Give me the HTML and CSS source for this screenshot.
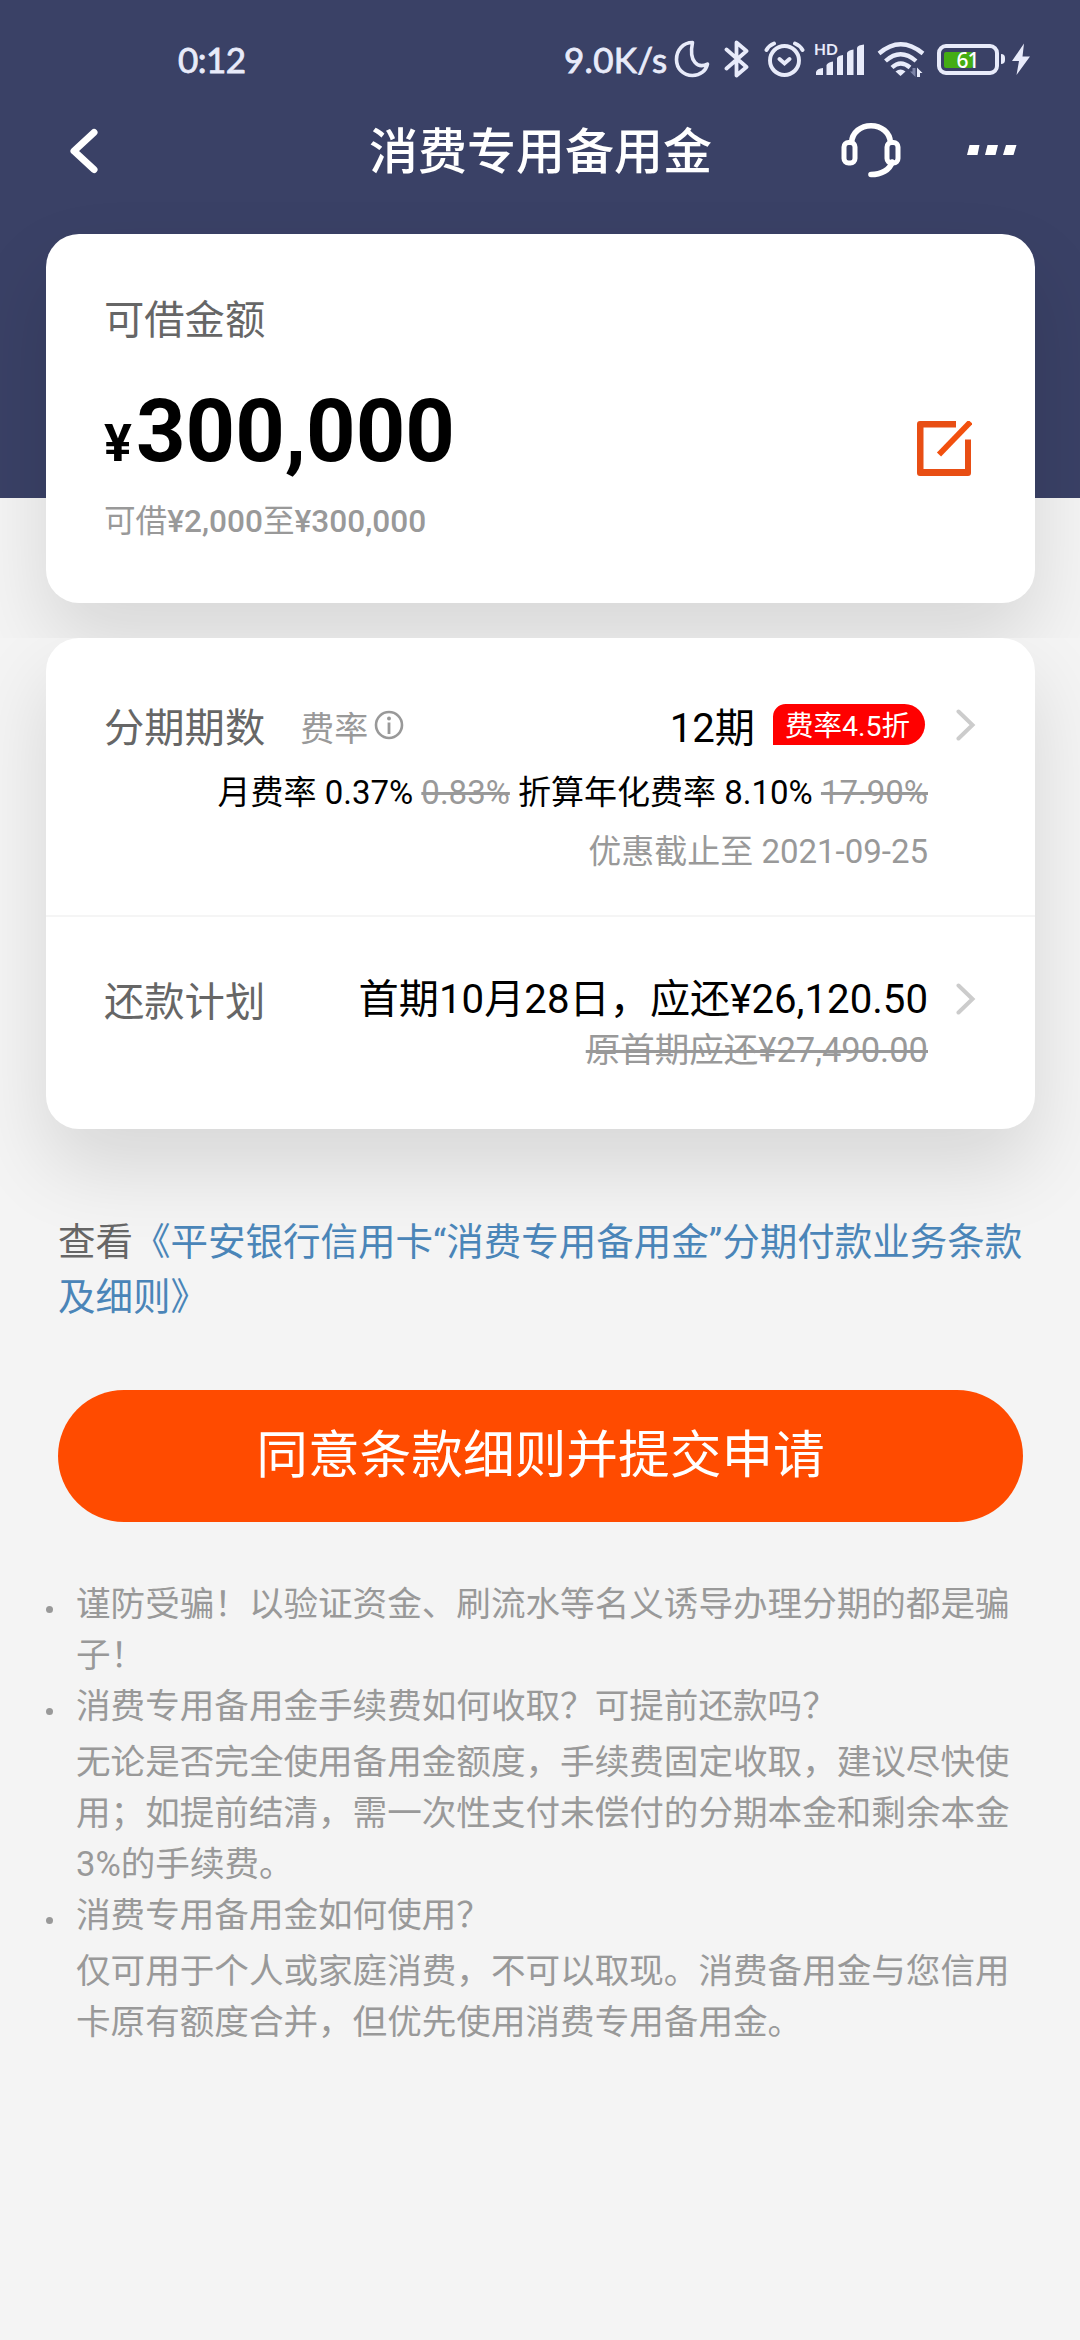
FILE: index.html
```html
<!DOCTYPE html>
<html lang="zh-CN">
<head>
<meta charset="utf-8">
<title>消费专用备用金</title>
<link rel="stylesheet" href="styles.css">
</head>
<body>
<section class="top">
  <div class="status">
    <span class="time">0:12</span>
    <span class="speed">9.0K/s</span>
    <svg class="moon" width="36" height="40" viewBox="0 0 36 40"><path d="M18.500 3.500C9 3.500 2.500 11 2.500 20.500S9.500 36.500 18.500 36.500C26.500 36.500 32 31.500 33.500 25C24 30 14.500 23 18.500 3.500Z" fill="none" stroke="currentColor" stroke-width="3.600" stroke-linejoin="round"/></svg>
    <svg class="bt" width="26" height="40" viewBox="0 0 26 40"><path d="M2.500 10.500L22.500 28L12.500 36.500V3.500L22.500 12L2.500 29.500" fill="none" stroke="currentColor" stroke-width="3.800" stroke-linejoin="round" stroke-linecap="round"/></svg>
    <svg class="alarm" width="42" height="40" viewBox="0 0 42 40"><g fill="none" stroke="currentColor" stroke-width="3.900" stroke-linecap="round"><circle cx="20.500" cy="21.500" r="14.500"/><path d="M15.500 20L20.500 24.500L25.500 20M2.500 11Q5 6.500 10 4.500M38.500 11Q36 6.500 31 4.500"/></g></svg>
    <svg class="signal" width="52" height="40" viewBox="0 0 52 40"><text x="0" y="16.300" font-size="15.500" class="hd" fill="currentColor">HD</text><g fill="currentColor"><path d="M2 36V33Q3 29.500 9 29V36ZM12.500 36V26Q14 23 19 22.500V36ZM23 36V19Q24 16.500 29 16V36ZM33 36V14Q34 11 39.500 10.500V36Z"/><path d="M43 36V8.500Q44 6 50 5.500V36Z"/></g></svg>
    <svg class="wifi" width="50" height="40" viewBox="0 0 50 40"><g fill="none" stroke="currentColor" stroke-width="4.300"><path d="M2 14.500Q23.500-4 46 14.500M8.500 22Q23.500 8.500 39 22M15 28.500Q23.500 20.500 33 28.500"/></g><path d="M18.500 32.500Q23.500 28.500 28.500 32.500L23.500 37Z" fill="currentColor"/><path d="M35.500 29h3v9l-5.500-5.500h2.500Z" fill="#7d84a8"/><path d="M40 38V28.500L45.500 34H43V38Z" fill="currentColor"/></svg>
    <span class="battery"><span class="level"></span><span class="pct">61</span></span>
    <span class="nub"></span>
    <svg class="bolt" width="20" height="40" viewBox="0 0 20 40"><path d="M13 4.500L1 22H8L5.500 36L19 17.500H11.500Z" fill="currentColor"/></svg>
  </div>
  <nav class="nav">
    <svg class="back" width="32" height="48" viewBox="0 0 32 48"><path d="M26 5.500L6 24L26 42.500" fill="none" stroke="#fff" stroke-width="7" stroke-linecap="round" stroke-linejoin="round"/></svg>
    <h1>消费专用备用金</h1>
    <svg class="headset" width="60" height="58" viewBox="0 0 60 58"><g fill="none" stroke="#fff" stroke-width="5"><path d="M10.500 21C11 10 20 3.700 30 3.700S49 10 49.500 21" stroke-width="5.600"/><rect x="3" y="20.500" width="11" height="20.500" rx="4.500"/><rect x="46" y="20.500" width="11" height="20.500" rx="4.500"/><path d="M51 40C49 48 40 52.500 30 52.500" stroke-linecap="round" stroke-width="5.600"/></g></svg>
    <svg class="more" width="50" height="10" viewBox="0 0 50 10"><path d="M2.500 0h10l-2 10H0ZM20.500 0h10.500l-2.500 10H18ZM39 0h10.500l-3 10H36Z" fill="#fff"/></svg>
  </nav>
  <div class="card quota">
    <div class="label">可借金额</div>
    <div class="amount-row">
      <div class="amount"><span class="yen">¥</span>300,000</div>
      <svg class="edit" width="55" height="55" viewBox="0 0 55 55"><path d="M39 0V6.500H6.500V48H48V18.500H54V52a3 3 0 0 1-3 3H3a3 3 0 0 1-3-3V3A3 3 0 0 1 3 0Z" fill="#e84e14"/><path d="M24 31.500L51.500 3" stroke="#f2500e" stroke-width="5.800" stroke-linecap="square"/></svg>
    </div>
    <div class="range">可借<b>¥2,000</b>至<b>¥300,000</b></div>
  </div>
</section>
<section class="plan">
  <div class="card">
    <div class="row term">
      <div class="line">
        <span class="label">分期期数</span>
        <span class="fee">费率</span>
        <svg class="info" width="30" height="30" viewBox="0 0 30 30"><circle cx="15" cy="15" r="13" fill="none" stroke="#999" stroke-width="2.600"/><circle cx="15" cy="8.500" r="2" fill="#999"/><path d="M15 12.500V24" stroke="#999" stroke-width="2.800"/></svg>
        <span class="value">12期</span>
        <span class="badge">费率4.5折</span>
        <svg class="chev" width="20" height="32" viewBox="0 0 20 32"><path d="M2.500 2.500L16.500 16L2.500 29.500" fill="none" stroke="#ccc" stroke-width="4" stroke-linecap="round"/></svg>
      </div>
      <div class="rate">月费率 0.37% <s>0.83%</s> 折算年化费率 8.10% <s>17.90%</s></div>
      <div class="until">优惠截止至 2021-09-25</div>
    </div>
    <div class="row repay">
      <div class="line">
        <span class="label">还款计划</span>
        <span class="value">首期10月28日，应还¥26,120.50</span>
        <svg class="chev" width="20" height="32" viewBox="0 0 20 32"><path d="M2.500 2.500L16.500 16L2.500 29.500" fill="none" stroke="#ccc" stroke-width="4" stroke-linecap="round"/></svg>
      </div>
      <div class="origin"><s>原首期应还¥27,490.00</s></div>
    </div>
  </div>
  <p class="terms">查看<a>《平安银行信用卡“消费专用备用金”分期付款业务条款及细则》</a></p>
  <button class="submit">同意条款细则并提交申请</button>
  <ul class="tips">
    <li>谨防受骗！以验证资金、刷流水等名义诱导办理分期的都是骗子！</li>
    <li>消费专用备用金手续费如何收取？可提前还款吗？<p>无论是否完全使用备用金额度，手续费固定收取，建议尽快使用；如提前结清，需一次性支付未偿付的分期本金和剩余本金3%的手续费。</p></li>
    <li>消费专用备用金如何使用？<p>仅可用于个人或家庭消费，不可以取现。消费备用金与您信用卡原有额度合并，但优先使用消费专用备用金。</p></li>
  </ul>
</section>
</body>
</html>
```
FILE: styles.css
```css
* { box-sizing: border-box; margin: 0; padding: 0; }
body {
  width: 1080px;
  height: 2340px;
  overflow: hidden;
  background: #f4f4f4;
  font-family: Roboto, "Noto Sans CJK SC", sans-serif;
  text-spacing-trim: space-all;
  text-autospace: no-autospace;
  color: #000;
}
svg { display: block; flex: none; }

.top {
  height: 638px;
  overflow: hidden;
  background: linear-gradient(#3a4166 498px, #f4f4f4 498px);
}
.status {
  display: flex;
  height: 80px;
  padding: 39px 0 0 178px;
  color: #e8ebfa;
  font: 35px/40px Lato, sans-serif;
  -webkit-text-stroke: 0.8px #e8ebfa;
}
.status svg, .battery { -webkit-text-stroke: 0; }
.time { width: 386px; letter-spacing: -0.5px; }
.speed { width: 110px; letter-spacing: 0.3px; white-space: nowrap; }
.bt { margin-left: 14px; }
.alarm { margin-left: 14px; }
.signal { margin-left: 8px; }
.hd { font-family: Lato, sans-serif; font-weight: 700; }
.wifi { margin-left: 11px; }
.battery {
  display: flex;
  position: relative;
  flex: none;
  width: 62px;
  height: 31px;
  margin: 5px 2px 0 10px;
  padding: 4px;
  border: 4px solid #e8ebfa;
  border-radius: 9px;
}
.level { width: 29px; height: 16px; margin: -0.5px 0 0 -1px; background: #44ad14; border-radius: 2px; }
.pct {
  position: absolute;
  left: 15.5px;
  top: 1px;
  font: 500 21px/23px "Noto Sans", sans-serif;
  letter-spacing: -1px;
  color: #fff;
}
.nub { width: 4px; height: 10px; margin-top: 15px; background: #e8ebfa; border-radius: 0 4px 4px 0; }
.bolt { margin-left: 6px; }

.nav {
  display: flex;
  align-items: center;
  height: 144px;
  padding-left: 68px;
}
.back { margin-top: -2px; }
h1 {
  flex: none;
  width: 344px;
  margin: 2px 0 0 269px;
  font-size: 49px;
  line-height: 60px;
  font-weight: 500;
  color: #fff;
}
.headset { margin: -2px 0 0 128px; }
.more { margin: -4px 0 0 66px; }

.card {
  width: 989px;
  margin-left: 46px;
  border-radius: 33px;
  background: #fff;
  box-shadow: 0 38px 80px rgba(0, 0, 0, 0.12);
}
.quota { height: 369px; margin-top: 10px; padding: 62px 63px 0 58px; }
.label { font-size: 40.300px; line-height: 50px; color: #666; }
.amount-row { display: flex; justify-content: space-between; margin-top: 36px; height: 100px; }
.amount { font-size: 86.500px; line-height: 100px; font-weight: 700; }
.yen { font-size: 52px; margin-right: 4px; }
.edit { margin-top: 39px; }
.range { margin-top: 20px; font-size: 31.600px; line-height: 40px; color: #999; }
.range b { font-weight: 500; }

.plan { height: 1702px; overflow: hidden; background: #f4f4f4; }
.row { padding: 66px 59px 0 58px; }
.term { height: 279px; border-bottom: 2px solid #f5f5f5; }
.repay { height: 212px; padding-top: 58px; }
.line { display: flex; height: 50px; line-height: 50px; }
.fee { margin-left: 35px; font-size: 34px; color: #999; }
.info { margin: 6px 0 0 6px; }
.value { margin-left: auto; font-size: 40.200px; white-space: nowrap; }
.badge {
  width: 152px;
  height: 41px;
  margin-left: 18px;
  padding-left: 12px;
  border-radius: 13px 21px 21px 0;
  background: #f00;
  color: #fff;
  font-size: 28.500px;
  line-height: 45px;
  white-space: nowrap;
}
.term .chev { margin: 5px 0 0 31px; }
.repay .chev { margin: 8px 0 0 28px; }
.repay .label { padding-top: 3px; }
.rate, .until, .origin { padding-right: 48px; text-align: right; white-space: nowrap; }
.rate { margin-top: 10px; font-size: 33px; line-height: 58px; }
.until { margin-top: 1px; font-size: 33px; line-height: 58px; color: #999; }
.origin { font-size: 34.500px; line-height: 50px; }
s { color: #999; }

.terms {
  width: 966px;
  margin: 86px 0 0 58px;
  font-size: 37.500px;
  line-height: 55px;
  color: #666;
}
.terms a { color: #4a85b8; }
.submit {
  display: block;
  width: 965px;
  height: 132px;
  margin: 65px 0 0 58px;
  border: 0;
  border-radius: 66px;
  background: #ff4b00;
  color: #fff;
  font: 51.700px/60px Roboto, "Noto Sans CJK SC", sans-serif;
}
.tips {
  list-style: none;
  margin: 57px 0 0 46px;
  font-size: 34.600px;
  line-height: 51px;
  color: #999;
}
.tips li { position: relative; width: 968px; padding-left: 30px; }
.tips li::before {
  content: "";
  position: absolute;
  left: 0;
  top: 27px;
  width: 7px;
  height: 7px;
  border-radius: 50%;
  background: #999;
}
.tips p { margin-top: 5px; }
```
